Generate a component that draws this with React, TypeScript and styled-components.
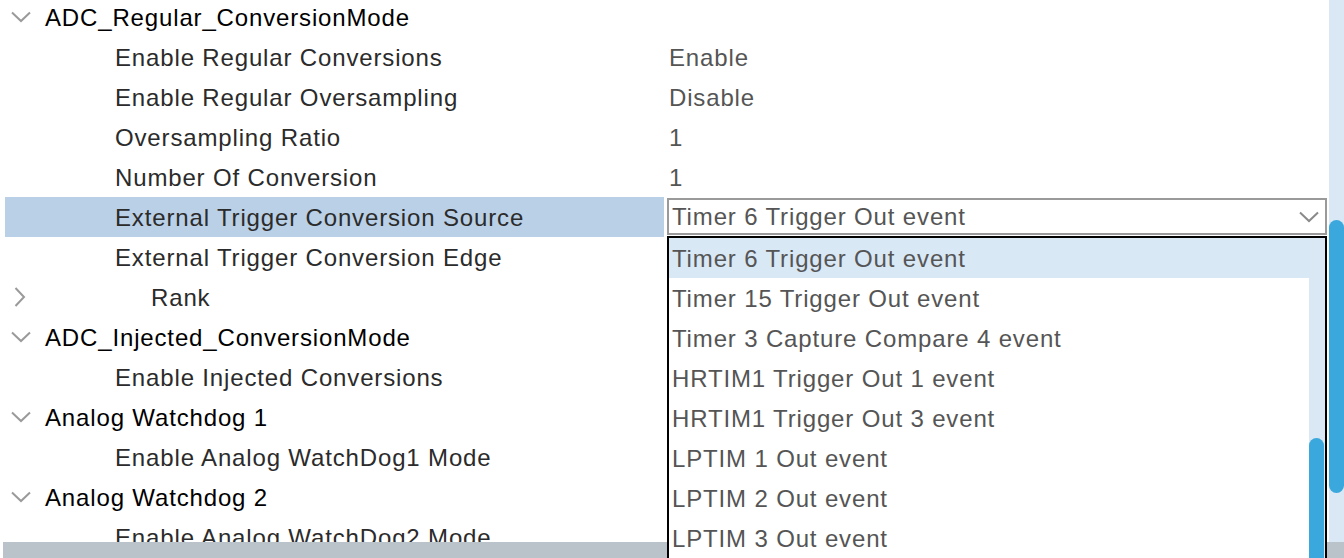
import React from "react";
import styled, { createGlobalStyle } from "styled-components";

const GlobalStyle = createGlobalStyle`
  html, body {
    margin: 0;
    padding: 0;
    background: #ffffff;
    overflow: hidden;
  }
  body {
    font-family: "Liberation Sans", Arial, sans-serif;
    letter-spacing: 0.85px;
  }
`;

const Page = styled.div`
  position: relative;
  width: 1344px;
  height: 558px;
  overflow: hidden;
  display: grid;
  grid-template-columns: 1fr 15px;
  grid-template-rows: 1fr 16px;
  background: #fff;
`;

const TreeArea = styled.div`
  overflow: hidden;
  padding-left: 5px;
`;

const Tree = styled.div`
  margin-top: -3px;
  display: flex;
  flex-direction: column;
`;

const Row = styled.div`
  display: flex;
  height: 40px;
  align-items: stretch;
`;

const LabelCell = styled.div<{ $selected?: boolean }>`
  width: 659px;
  flex: none;
  display: flex;
  align-items: center;
  background: ${(p) => (p.$selected ? "#bad0e6" : "transparent")};
`;

const Twisty = styled.span`
  width: 40px;
  flex: none;
  display: flex;
  align-items: center;
  justify-content: flex-start;
  padding-left: 6px;
  box-sizing: border-box;
`;

const Label = styled.span<{ $group?: boolean; $indent: number }>`
  padding-left: ${(p) => p.$indent}px;
  padding-top: 2px;
  font-size: 24px;
  color: ${(p) => (p.$group ? "#000000" : "#2b2b2b")};
  white-space: nowrap;
`;

const ValueCell = styled.div`
  flex: 1;
  display: flex;
  align-items: center;
  padding: 2px 0 0 5px;
  font-size: 24px;
  color: #555555;
  white-space: nowrap;
`;

const Combo = styled.div`
  margin-left: 3px;
  margin-top: 1px;
  height: 37px;
  width: 660px;
  box-sizing: border-box;
  border: 2px solid #9a9a9a;
  display: flex;
  align-items: center;
  justify-content: space-between;
  padding: 1px 6px 0 3px;
  font-size: 24px;
  color: #555555;
  background: #fff;
  white-space: nowrap;
`;

const VScroll = styled.div`
  background: #dae8f5;
  position: relative;
`;

const Thumb = styled.div<{ $top: number; $height: number }>`
  position: absolute;
  left: 0;
  width: 15px;
  top: ${(p) => p.$top}px;
  height: ${(p) => p.$height}px;
  background: #3aa8dc;
  border-radius: 8px;
`;

const HBar = styled.div`
  grid-column: 1 / span 2;
  margin-left: 3px;
  background: #b9c3c9;
`;

const DropList = styled.div`
  position: absolute;
  left: 667px;
  top: 236px;
  width: 660px;
  height: 340px;
  box-sizing: border-box;
  border: 2px solid #000;
  background: #fff;
  display: grid;
  grid-template-columns: 1fr 16px;
`;

const Options = styled.div`
  display: flex;
  flex-direction: column;
`;

const Option = styled.div<{ $active?: boolean }>`
  height: 40px;
  flex: none;
  box-sizing: border-box;
  display: flex;
  align-items: center;
  padding: 2px 0 0 3px;
  font-size: 24px;
  color: #555555;
  white-space: nowrap;
  background: ${(p) => (p.$active ? "#d9e8f5" : "#fff")};
`;

const ListTrack = styled.div`
  background: #dae8f5;
  position: relative;
`;

const ChevronDown = ({ color = "#9a9a9a" }: { color?: string }) => (
  <svg width="20" height="12" viewBox="0 0 20 12">
    <polyline points="1,1.5 10,10 19,1.5" fill="none" stroke={color} strokeWidth="2" />
  </svg>
);

const ChevronRight = () => (
  <svg width="12" height="20" viewBox="0 0 12 20" style={{ marginLeft: 3 }}>
    <polyline points="1.5,1 10,10 1.5,19" fill="none" stroke="#9a9a9a" strokeWidth="2" />
  </svg>
);

type Item = {
  label: string;
  level: number;
  twisty?: "open" | "closed";
  value?: string;
  combo?: boolean;
  selected?: boolean;
};

const items: Item[] = [
  { label: "ADC_Regular_ConversionMode", level: 0, twisty: "open" },
  { label: "Enable Regular Conversions", level: 1, value: "Enable" },
  { label: "Enable Regular Oversampling", level: 1, value: "Disable" },
  { label: "Oversampling Ratio", level: 1, value: "1" },
  { label: "Number Of Conversion", level: 1, value: "1" },
  { label: "External Trigger Conversion Source", level: 1, combo: true, selected: true },
  { label: "External Trigger Conversion Edge", level: 1 },
  { label: "Rank", level: 2, twisty: "closed" },
  { label: "ADC_Injected_ConversionMode", level: 0, twisty: "open" },
  { label: "Enable Injected Conversions", level: 1 },
  { label: "Analog Watchdog 1", level: 0, twisty: "open" },
  { label: "Enable Analog WatchDog1 Mode", level: 1 },
  { label: "Analog Watchdog 2", level: 0, twisty: "open" },
  { label: "Enable Analog WatchDog2 Mode", level: 1 },
];

const options = [
  "Timer 6 Trigger Out event",
  "Timer 15 Trigger Out event",
  "Timer 3 Capture Compare 4 event",
  "HRTIM1 Trigger Out 1 event",
  "HRTIM1 Trigger Out 3 event",
  "LPTIM 1 Out event",
  "LPTIM 2 Out event",
  "LPTIM 3 Out event",
];

const indents = [0, 70, 106];

export default function App() {
  return (
    <>
      <GlobalStyle />
      <Page>
        <TreeArea>
          <Tree>
            {items.map((it) => (
              <Row key={it.label}>
                <LabelCell $selected={it.selected}>
                  <Twisty>
                    {it.twisty === "open" && <ChevronDown />}
                    {it.twisty === "closed" && <ChevronRight />}
                  </Twisty>
                  <Label $group={it.level === 0} $indent={indents[it.level]}>
                    {it.label}
                  </Label>
                </LabelCell>
                {it.combo ? (
                  <Combo>
                    <span>Timer 6 Trigger Out event</span>
                    <ChevronDown color="#8a8a8a" />
                  </Combo>
                ) : (
                  <ValueCell>{it.value}</ValueCell>
                )}
              </Row>
            ))}
          </Tree>
        </TreeArea>
        <VScroll>
          <Thumb $top={220} $height={273} />
        </VScroll>
        <HBar />
        <DropList>
          <Options>
            {options.map((o, i) => (
              <Option key={o} $active={i === 0}>
                {o}
              </Option>
            ))}
          </Options>
          <ListTrack>
            <Thumb $top={200} $height={160} />
          </ListTrack>
        </DropList>
      </Page>
    </>
  );
}
